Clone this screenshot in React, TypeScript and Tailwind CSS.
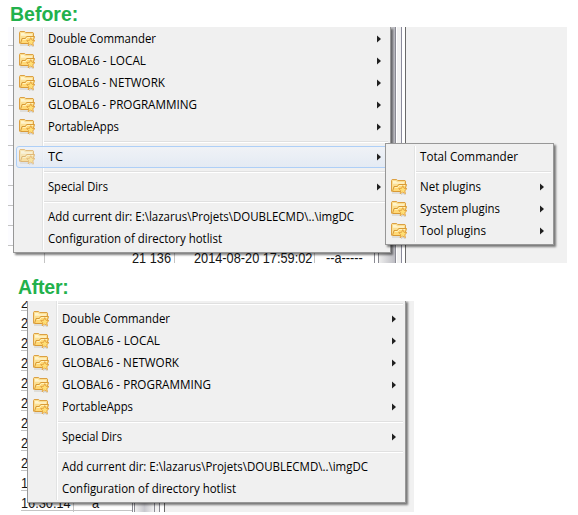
import type { ReactNode } from 'react';

type Entry =
  | { kind: 'sep' }
  | { kind: 'item'; label: string; width: string; icon?: boolean; arrow?: boolean; active?: boolean };

const sep: Entry = { kind: 'sep' };

const folders: Entry[] = [
  { kind: 'item', label: 'Double Commander', width: 'w-[108px]', icon: true, arrow: true },
  { kind: 'item', label: 'GLOBAL6 - LOCAL', width: 'w-[98px]', icon: true, arrow: true },
  { kind: 'item', label: 'GLOBAL6 - NETWORK', width: 'w-[117px]', icon: true, arrow: true },
  { kind: 'item', label: 'GLOBAL6 - PROGRAMMING', width: 'w-[149px]', icon: true, arrow: true },
  { kind: 'item', label: 'PortableApps', width: 'w-[71px]', icon: true, arrow: true },
];

const tail: Entry[] = [
  sep,
  { kind: 'item', label: 'Special Dirs', width: 'w-[60px]', arrow: true },
  sep,
  { kind: 'item', label: 'Add current dir: E:\\lazarus\\Projets\\DOUBLECMD\\..\\imgDC', width: 'w-[306px]' },
  { kind: 'item', label: 'Configuration of directory hotlist', width: 'w-[174px]' },
];

const beforeMenu: Entry[] = [
  ...folders,
  sep,
  { kind: 'item', label: 'TC', width: 'w-[15px]', icon: true, arrow: true, active: true },
  ...tail,
];

const afterMenu: Entry[] = [sep, ...folders, ...tail];

const subMenu: Entry[] = [
  { kind: 'item', label: 'Total Commander', width: 'w-[98px]' },
  sep,
  { kind: 'item', label: 'Net plugins', width: 'w-[61px]', icon: true, arrow: true },
  { kind: 'item', label: 'System plugins', width: 'w-[80px]', icon: true, arrow: true },
  { kind: 'item', label: 'Tool plugins', width: 'w-[66px]', icon: true, arrow: true },
];

function FolderStar({ faded }: { faded?: boolean }) {
  return (
    <svg viewBox="0 0 17 16" className={`h-4 w-[17px] shrink-0 ${faded ? 'opacity-65' : ''}`}>
      <path d="M1 14h9M10 15.6l2-1.2 2.6 1.4" fill="none" stroke="#b9b4a8" strokeOpacity=".6" />
      <path d="M.5 12.5v-11l.6-1h4.6l1 1h7.3l.5.6v4.4" fill="#fbdf93" stroke="#dca043" />
      <path d="M2 2h3l1 1.3h7v1.4H2z" fill="#fff4cb" />
      <path d="M1.5 12.5L3 7.5h3.3l1.4-2h7.8l-2 7z" fill="#ffd977" stroke="#d99a35" strokeLinejoin="round" />
      <path d="M3.8 8.5h3l1.4-2h5.8" fill="none" stroke="#fff2bd" />
      <path
        d="M11.8 6.6l1.2 2.7 3 .3-2.2 2 .7 3.1-2.7-1.6-2.7 1.6.7-3.1-2.2-2 3-.3z"
        fill="#ffdf76"
        stroke="#e09c3a"
        strokeWidth=".8"
        strokeLinejoin="round"
      />
    </svg>
  );
}

function Menu({ entries, width, className }: { entries: Entry[]; width: string; className: string }) {
  return (
    <div className={`${className} ${width} border-[#979797] bg-[#f0f0f0] pb-[2px] shadow-[2px_2px_2px_0px_rgba(0,0,0,0.5)]`}>
      <div className="relative">
        <div className="absolute top-0 bottom-0 left-[28px] w-[2px] border-l border-[#e2e3e3] bg-white" />
        {entries.map((e, i) =>
          e.kind === 'sep' ? (
            <div key={i} className="relative flex h-2 items-center pr-[2px] pl-[30px]">
              <div className="h-[2px] w-full border-t border-[#e0e0e0] bg-white" />
            </div>
          ) : (
            <div
              key={i}
              className={`relative flex h-[22px] items-center pr-[9px] pl-[5px] ${
                e.active ? 'before:absolute before:inset-y-0 before:right-[2px] before:left-[2px] before:rounded-[3px] before:border before:border-[#aecff7] before:bg-linear-to-b before:from-[#eff2f7]/90 before:to-[#dfe8f5]/70' : ''
              }`}
            >
              <div className="relative w-[29px]">{e.icon && <FolderStar faded={e.active} />}</div>
              <Label className={e.width}>{e.label}</Label>
              <div className="grow" />
              {e.arrow && (
                <svg viewBox="0 0 4 8" className="relative h-2 w-1">
                  <path d="M0 .5l4 3.5L0 7.5z" fill="#202020" />
                </svg>
              )}
            </div>
          ),
        )}
      </div>
    </div>
  );
}

function Label({ className, children }: { className: string; children: string }) {
  return (
    <svg className={`relative h-[22px] overflow-visible ${className}`}>
      <text x="0" y="15" textLength="100%" lengthAdjust="spacingAndGlyphs" className="fill-black font-['Open_Sans',sans-serif] text-[12px]">
        {children}
      </text>
    </svg>
  );
}

function Cell({ className, children }: { className?: string; children?: ReactNode }) {
  return <div className={`h-5 shrink-0 overflow-hidden border-b border-[#c4c4c4] ${className ?? ''}`}>{children}</div>;
}

function Data({ children }: { children: string }) {
  return (
    <span className="inline-block origin-left scale-x-[0.85] pt-px font-['Liberation_Sans',sans-serif] text-[15px] leading-[20px] whitespace-nowrap text-[#151515]">
      {children}
    </span>
  );
}

export default function App() {
  return (
    <main className="h-[515px] w-[578px] overflow-hidden bg-white font-['Liberation_Sans',sans-serif]">
      <h1 className="h-[27px] pl-[10px] text-[19.5px] leading-[28px] font-bold text-[#22b14c]">Before:</h1>
      <section className="relative ml-2 h-[236px] w-[559px] bg-[#f1f1f1]">
        <div className="flex h-full overflow-hidden">
          <div className="w-[366px] shrink-0 overflow-hidden bg-[#fcfcff]">
            <div className="-mt-[1px]">
              {Array.from({ length: 11 }, (_, i) => (
                <Cell key={i} />
              ))}
              <div className="flex h-5 bg-white">
                <div className="w-[37px] border-r border-[#c4c4c4]" />
                <div className="w-[130px] border-r border-[#c4c4c4] pl-[87px]"><Data>21 136</Data></div>
                <div className="w-[140px] border-r border-[#c4c4c4] pl-[19px] whitespace-nowrap"><Data>2014-08-20 17:59:02</Data></div>
                <div className="pl-[11px]"><Data>--a-----</Data></div>
              </div>
            </div>
          </div>
          <div className="w-[5px] shrink-0 border-x border-[#8a8a92] bg-white" />
          <div className="w-4 shrink-0 bg-linear-to-r from-[#eeeeee] to-[#bcbcc2]" />
          <div className="w-[2px] shrink-0 border-l border-[#8b8b94] bg-white" />
          <div className="w-[4px] shrink-0 bg-[#f1f1f1]" />
          <div className="w-[5px] shrink-0 border-x border-l-[#8b8b9c] border-r-[#696969] bg-white" />
        </div>
        <Menu entries={beforeMenu} width="w-[378px]" className="absolute top-0 left-[5px] border-r border-b border-l pt-px [clip-path:inset(0_-6px_-6px_0)]" />
        <Menu entries={subMenu} width="w-[169px]" className="absolute top-[116px] left-[377px] border pt-[2px]" />
      </section>
      <h1 className="h-[38px] pt-[10px] pl-[18px] text-[19.5px] leading-[29px] font-bold tracking-[-0.25px] text-[#22b14c]">After:</h1>
      <section className="relative ml-[21px] h-[211px] w-[393px] bg-[#f1f1f1]">
        <div className="flex h-full overflow-hidden">
          <div className="w-[53px] shrink-0 overflow-hidden border-r border-[#c4c4c4] bg-white">
            <div className="-mt-[10px]">
              {['2', '2', '2', '2', '2', '2', '2', '2', '2', '1', '16:30:14'].map((t, i) => (
                <Cell key={i}><Data>{t}</Data></Cell>
              ))}
            </div>
          </div>
          <div className="w-[58px] shrink-0 bg-white pt-[190px]">
            <Cell className="pl-[18px]"><Data>a</Data></Cell>
          </div>
          <div className="w-[3px] shrink-0 border-x border-[#8a8a92] bg-white" />
          <div className="w-[19px] shrink-0 bg-linear-to-r from-[#f1f1f1] via-[#c8c8ce] to-[#f1f1f1]" />
          <div className="w-[6px] shrink-0 border-x border-[#8b8b94] bg-[#f1f1f1]" />
          <div className="w-[5px] shrink-0 border-r border-[#696969] bg-white" />
        </div>
        <Menu entries={afterMenu} width="w-[379px]" className="absolute -top-px left-[6px] border-r border-b border-l [clip-path:inset(1px_-6px_-6px_0)]" />
      </section>
    </main>
  );
}
